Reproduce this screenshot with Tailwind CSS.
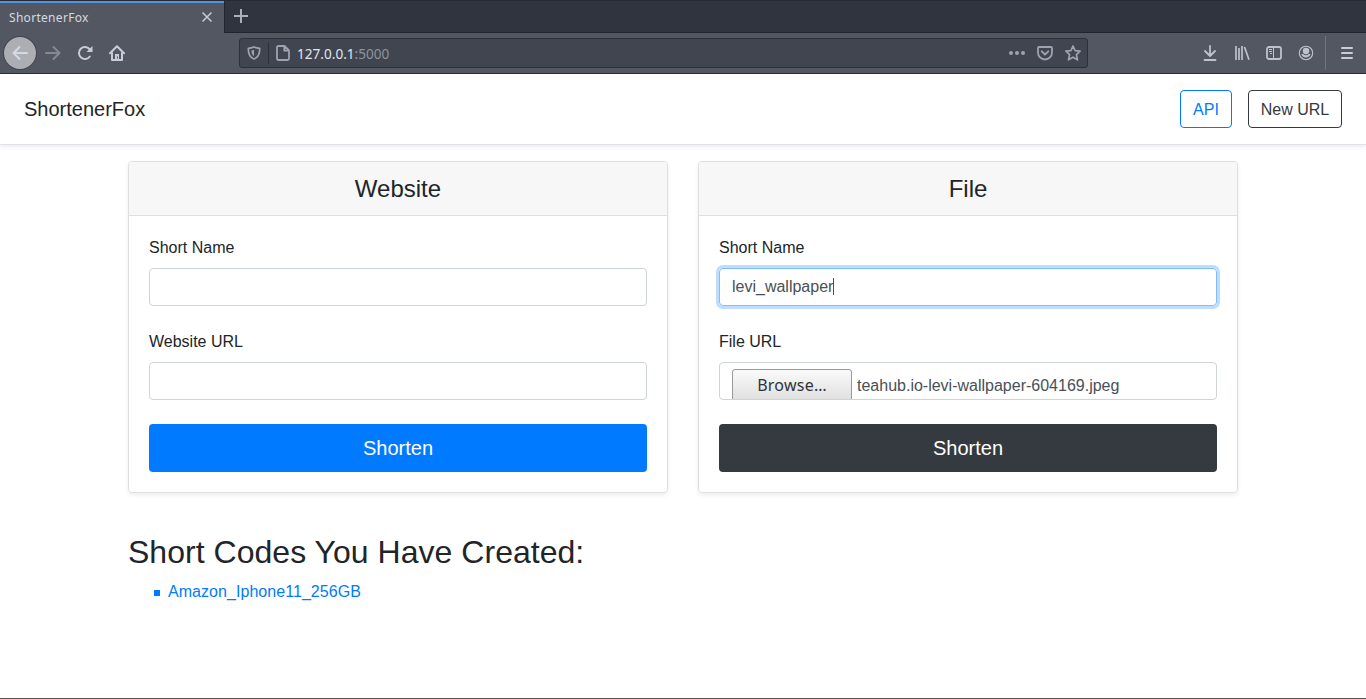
<!DOCTYPE html>
<html lang="en">
<head>
<meta charset="utf-8">
<title>ShortenerFox</title>
<script src="https://cdn.jsdelivr.net/npm/@tailwindcss/browser@4"></script>
</head>
<body class="w-[1366px] h-[699px] overflow-hidden bg-white text-[#212529] text-base font-['Liberation_Sans',Arial,sans-serif]">
<div class="flex flex-col h-[699px]">
  <!-- Tab strip -->
  <div class="flex h-[33px] shrink-0 bg-[#2f343f] border-t border-[#262932] font-['Noto_Sans',sans-serif]">
    <div class="w-[224px] bg-[#535762] border-t-2 border-[#5294e2] flex items-center justify-between pl-[9px] pr-[11px]">
      <span class="text-[12px] leading-none tracking-[0.3px] text-[#d3dae3]">ShortenerFox</span>
      <svg class="w-3 h-3 -mt-[3px]" viewBox="0 0 12 12" fill="none" stroke="#c5ccd8" stroke-width="1.500"><path d="M1.500 1.500l9 9M10.500 1.500l-9 9"/></svg>
    </div>
    <div class="flex-1 border-l border-b border-[#22252e] pl-[9px] pt-[8px]">
      <svg class="w-[14px] h-[14px]" viewBox="0 0 14 14" fill="none" stroke="#a9b0bd" stroke-width="2"><path d="M7 0v14M0 7h14"/></svg>
    </div>
  </div>
  <!-- Toolbar -->
  <div class="flex items-center h-[41px] shrink-0 bg-[#535762] border-b border-[#2b2e39] pl-[4px] font-['Noto_Sans',sans-serif]">
    <div class="w-8 h-8 rounded-full bg-[#adaeb3] ring-1 ring-[#41444f] flex items-center justify-center">
      <svg class="w-4 h-4" viewBox="0 0 16 16" fill="none" stroke="#d3dae3" stroke-width="2" stroke-linecap="round" stroke-linejoin="round"><path d="M15 8H1.500M7.500 2L1.500 8l6 6"/></svg>
    </div>
    <svg class="w-4 h-4 ml-[9px]" viewBox="0 0 16 16" fill="none" stroke="#858994" stroke-width="2" stroke-linecap="round" stroke-linejoin="round"><path d="M1 8h13.500M8.500 2l6 6-6 6"/></svg>
    <svg class="w-4 h-4 ml-4" viewBox="0 0 16 16" fill="none"><path d="M12.800 11.500A6 6 0 1 1 12.500 4" stroke="#c7cdd8" stroke-width="2" stroke-linecap="round"/><path d="M15.500 1v6H9.500z" fill="#c7cdd8"/></svg>
    <svg class="w-4 h-4 ml-4" viewBox="0 0 16 16" fill="none" stroke="#c7cdd8" stroke-width="2" stroke-linecap="round" stroke-linejoin="round"><path d="M1 8.300L8 1.300l7 7M3 8V15h10V8"/><path d="M8 14.500V9" stroke-width="4" stroke-linecap="butt"/><path d="M8.500 13.500v-2" stroke="#535762" stroke-width="1" stroke-linecap="butt"/></svg>
    <div class="ml-[114px] w-[849px] h-[30px] shrink-0 rounded-[3px] border border-[#2c303b] bg-[#404550] flex items-center">
      <svg class="w-3.5 h-3.5 ml-[7px]" viewBox="0 0 14 14" fill="none" stroke="#9da3b0" stroke-width="1.700" stroke-linejoin="round"><path d="M7 1C5 1.800 3 2.200 1.300 2.300 1.200 7.500 2.500 11.500 7 13c4.500-1.500 5.800-5.500 5.700-10.700C11 2.200 9 1.800 7 1z"/><path d="M7 4C6 4.300 5.200 4.500 4.400 4.600 4.500 7.200 5.200 9.200 7 10.200z" fill="#9da3b0" stroke="none"/></svg>
      <div class="ml-[7px] w-px h-[22px] bg-[#2c303b]"></div>
      <svg class="w-4 h-4 ml-[6px]" viewBox="0 0 16 16" fill="none" stroke="#9da3b0" stroke-width="1.800" stroke-linejoin="round"><path d="M3.500 1H9.500L14 5.500V13.500Q14 15 12.500 15H3.500Q2 15 2 13.500V2.500Q2 1 3.500 1zM9.300 1.200V5.700H13.800"/></svg>
      <span class="ml-[6px] mt-px text-[13.600px] leading-none text-[#e0e5ee]">127.0.0.1<span class="text-[#8e939f]">:5000</span></span>
      <div class="ml-auto mr-[6px] flex items-center gap-3">
        <svg class="w-4 h-4" viewBox="0 0 16 16" fill="#9da3b0"><circle cx="2" cy="8" r="2"/><circle cx="8" cy="8" r="2"/><circle cx="14" cy="8" r="2"/></svg>
        <svg class="w-4 h-4" viewBox="0 0 16 16" fill="none" stroke="#9da3b0" stroke-width="1.800" stroke-linecap="round" stroke-linejoin="round"><path d="M2 2h12q1 0 1 1v4.500a7 7 0 0 1-14 0V3q0-1 1-1z"/><path d="M4.700 6.300L8 9.500l3.300-3.200"/></svg>
        <svg class="w-4 h-4" viewBox="0 0 16 16" fill="none" stroke="#9da3b0" stroke-width="1.700" stroke-linejoin="round"><path d="M8 1l2.100 4.700 5 .5-3.700 3.400 1.100 5.200L8 12.200l-4.500 2.600 1.100-5.200L.9 6.200l5-.5z"/></svg>
      </div>
    </div>
    <div class="ml-auto flex items-center gap-4 text-[#bcc2ce]">
      <svg class="w-4 h-4" viewBox="0 0 16 16" fill="none" stroke="currentColor" stroke-width="1.800" stroke-linecap="round" stroke-linejoin="round"><path d="M8 1v9.500M3 6l5 5 5-5M2.500 15h11"/></svg>
      <svg class="w-4 h-4" viewBox="0 0 16 16" fill="none" stroke="currentColor" stroke-width="1.700"><path d="M2 1v14M5 3v12M8 1v14M10.500 2l4.500 12.700" /></svg>
      <svg class="w-4 h-4" viewBox="0 0 16 16" fill="none" stroke="currentColor" stroke-width="1.800"><rect x="1" y="2" width="14" height="12" rx="2"/><path d="M7.500 2v12" stroke-width="1"/><path d="M3 4.500h3M3 6.500h3M4 8.500h2" stroke-width="1"/></svg>
      <svg class="w-4 h-4" viewBox="0 0 16 16" fill="none"><circle cx="8" cy="8" r="6.700" stroke="currentColor" stroke-width="1.100"/><circle cx="8" cy="6" r="3.200" fill="currentColor"/><path d="M3.500 9H5.200Q8 11.500 10.800 9h1.700A4.800 4.800 0 0 1 3.500 9.500z" fill="currentColor"/></svg>
    </div>
    <div class="ml-[11px] w-px h-[34px] bg-[#70747f]"></div>
    <svg class="w-3 h-3 ml-[15px] mr-[13px]" viewBox="0 0 12 12" stroke="#c7cdd8" stroke-width="2" stroke-linecap="round"><path d="M1 1h10M1 6h10M1 11h10"/></svg>
  </div>
  <!-- Site header -->
  <header class="flex items-center justify-between h-[71px] shrink-0 px-6 border-b border-[#dee2e6] shadow-[0_2px_4px_rgba(0,0,0,0.075)]">
    <h5 class="text-[20px] leading-6">ShortenerFox</h5>
    <nav class="flex gap-4">
      <a class="w-[52px] h-[38px] pt-px flex items-center justify-center rounded border border-[#007bff] text-[#007bff]">API</a>
      <a class="w-[94px] h-[38px] pt-px flex items-center justify-center rounded border border-[#343a40] text-[#343a40]">New URL</a>
    </nav>
  </header>
  <main class="w-[1110px] ml-32 pt-4 flex-1">
    <div class="grid grid-cols-2 gap-[30px]">
      <section class="h-[332px] rounded border border-[#dfdfdf] shadow-[0_2px_4px_rgba(0,0,0,0.075)] overflow-hidden">
        <h4 class="h-[54px] bg-[#f7f7f7] border-b border-[#dfdfdf] text-center text-2xl leading-[53px]">Website</h4>
        <div class="p-5">
          <label class="block leading-[23px] mb-[9px]">Short Name</label>
          <div class="h-[38px] rounded border border-[#ced4da]"></div>
          <label class="block leading-[23px] mt-6 mb-[9px]">Website URL</label>
          <div class="h-[38px] rounded border border-[#ced4da]"></div>
          <div class="mt-6 h-12 rounded bg-[#007bff] text-white text-xl leading-12 text-center">Shorten</div>
        </div>
      </section>
      <section class="h-[332px] rounded border border-[#dfdfdf] shadow-[0_2px_4px_rgba(0,0,0,0.075)] overflow-hidden">
        <h4 class="h-[54px] bg-[#f7f7f7] border-b border-[#dfdfdf] text-center text-2xl leading-[53px]">File</h4>
        <div class="p-5">
          <label class="block leading-[23px] mb-[9px]">Short Name</label>
          <div class="h-[38px] rounded border border-[#80bdff] ring-3 ring-[#bfdeff] flex items-center pl-3 text-[#495057] leading-[34px]"><span class="-mt-px">levi_wallpaper</span><span class="w-px h-[17px] -mt-px bg-[#495057]"></span></div>
          <label class="block leading-[23px] mt-6 mb-[9px]">File URL</label>
          <div class="h-[38px] rounded border border-[#ced4da] overflow-hidden pl-3 pt-1.5 flex text-[#495057]">
            <span class="w-[120px] h-[34px] shrink-0 rounded-[3px] border border-[#999] bg-linear-to-b from-[#fafafa] to-[#dedede] text-center text-[#2f343a] leading-[31px] tracking-[0.25px] font-['Noto_Sans',sans-serif]">Browse…</span>
            <span class="ml-[5px] leading-[33px]">teahub.io-levi-wallpaper-604169.jpeg</span>
          </div>
          <div class="mt-6 h-12 rounded bg-[#343a40] text-white text-xl leading-12 text-center">Shorten</div>
        </div>
      </section>
    </div>
    <h2 class="mt-10 text-[32px] leading-[38px] tracking-[0.03px] mb-[9px]">Short Codes You Have Created:</h2>
    <div class="flex items-center pl-[26px] text-[#007bff] leading-6"><span class="w-1.5 h-1.5 bg-[#007bff] mr-2 mt-px"></span><a class="tracking-[0.05px]">Amazon_Iphone11_256GB</a></div>
  </main>
  <div class="h-px shrink-0 bg-[#5f4d47]"></div>
</div>
</body>
</html>
